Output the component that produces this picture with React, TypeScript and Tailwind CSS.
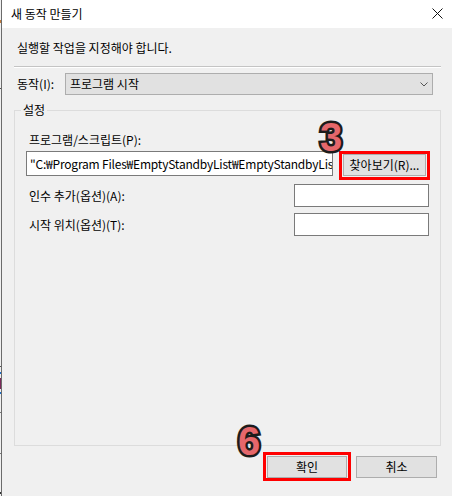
import React from "react";

// Marks on the 1px strip left of the window border (from the desktop behind)
const edgeMarks = [
  { top: 20, h: 3, color: "bg-[#c07a3a]" },
  { top: 88, h: 1, color: "bg-[#555555]" },
  { top: 366, h: 1, color: "bg-[#555555]" },
  { top: 372, h: 2, color: "bg-[#1e6fc8]" },
  { top: 378, h: 11, color: "bg-[#7a2a5a]" },
  { top: 392, h: 2, color: "bg-[#1e6fc8]" },
  { top: 412, h: 1, color: "bg-[#777777]" },
  { top: 453, h: 1, color: "bg-[#777777]" },
  { top: 492, h: 2, color: "bg-[#333333]" },
];

const LeftEdge = () => {
  let y = 0;
  return (
    <div className="flex w-px shrink-0 flex-col bg-[#f0f0f0]">
      {edgeMarks.map((m) => {
        const gap = m.top - y;
        y = m.top + m.h;
        return (
          <React.Fragment key={m.top}>
            <div style={{ height: gap }} />
            <div className={m.color} style={{ height: m.h }} />
          </React.Fragment>
        );
      })}
    </div>
  );
};

const Button = ({ label, className = "" }: { label: string; className?: string }) => (
  <div
    className={`flex h-[22px] items-center justify-center border border-[#adadad] bg-[#e1e1e1] ${className}`}
  >
    {label}
  </div>
);

const Marker = ({ n, className }: { n: string; className: string }) => (
  <div
    className={`absolute font-['Liberation_Sans',Arial,sans-serif] text-[40px] font-bold leading-none text-[#e5676b] [-webkit-text-stroke:5px_#1c1c1c] [paint-order:stroke_fill] ${className}`}
  >
    {n}
  </div>
);

export default function App() {
  return (
    <div className="flex h-[496px] w-[452px] overflow-hidden bg-[#f0f0f0] font-['Noto_Sans_CJK_KR','Noto_Sans',sans-serif] text-[12px] leading-4 text-black">
      <LeftEdge />
      <div className="w-px shrink-0 bg-[#6b6b6b]" />

      <div className="flex flex-1 flex-col">
        {/* Title bar */}
        <div className="flex h-[28px] items-center justify-between bg-white pl-[9px] pr-[9px]">
          <span>새 동작 만들기</span>
          <svg width="11" height="11" viewBox="0 0 11 11" className="mb-[2px]">
            <path d="M0.5 0.5 L10.5 10.5 M10.5 0.5 L0.5 10.5" stroke="#111" strokeWidth="1" fill="none" />
          </svg>
        </div>

        {/* Body */}
        <div className="relative flex flex-1 flex-col pl-[12px] pr-[11px]">
          <p className="ml-[3px] mt-[12px]">실행할 작업을 지정해야 합니다.</p>
          <div className="mt-[10px] h-[2px] border-t border-b border-t-[#c4c4c4] border-b-white" />

          <div className="mt-[5px] flex items-center">
            <span className="ml-[3px]">동작(I):</span>
            <div className="ml-auto mr-[8px] flex h-[22px] w-[368px] items-center justify-between border border-[#adadad] bg-[#e1e1e1] pl-[4px] pr-[4px]">
              <span>프로그램 시작</span>
              <svg width="8" height="5" viewBox="0 0 8 5">
                <path d="M0.5 0.5 L4 4 L7.5 0.5" stroke="#555" strokeWidth="1" fill="none" />
              </svg>
            </div>
          </div>

          <fieldset className="mt-[7px] h-[344px] border border-[#dcdcdc] p-0">
            <legend className="ml-[6px] px-[2px] leading-4">설정</legend>
            <div className="flex flex-col pl-[11px] pr-[10px] pt-[14px]">
              <span className="ml-[3px]">프로그램/스크립트(P):</span>
              <div className="mt-[3px] flex items-start">
                <div className="flex h-[25px] w-[307px] items-center overflow-hidden whitespace-nowrap border border-[#7a7a7a] bg-white pl-[3px] tracking-[-0.2px]">
                  "C:₩Program Files₩EmptyStandbyList₩EmptyStandbyList.exe"
                </div>
                <div className="ml-[6px] w-[91px] border-[3px] border-[#ff0000] px-px pb-px">
                  <Button label="찾아보기(R)..." />
                </div>
              </div>

              <div className="mt-[4px] flex items-center">
                <span className="ml-[3px]">인수 추가(옵션)(A):</span>
                <div className="ml-auto mr-px h-[23px] w-[135px] border border-[#7a7a7a] bg-white" />
              </div>

              <div className="mt-[6px] flex items-center">
                <span className="ml-[3px]">시작 위치(옵션)(T):</span>
                <div className="ml-auto mr-px h-[23px] w-[135px] border border-[#7a7a7a] bg-white" />
              </div>
            </div>
          </fieldset>

          <div className="mt-[6px] flex items-start justify-end pr-[4px]">
            <div className="w-[88px] border-[3px] border-[#ff0000] px-px pt-px">
              <Button label="확인" />
            </div>
            <Button label="취소" className="ml-[5px] mt-[4px] w-[81px]" />
          </div>

          {/* Step annotations */}
          <Marker n="3" className="left-[318px] top-[89px]" />
          <Marker n="6" className="left-[236px] top-[393px]" />
        </div>
      </div>
    </div>
  );
}
